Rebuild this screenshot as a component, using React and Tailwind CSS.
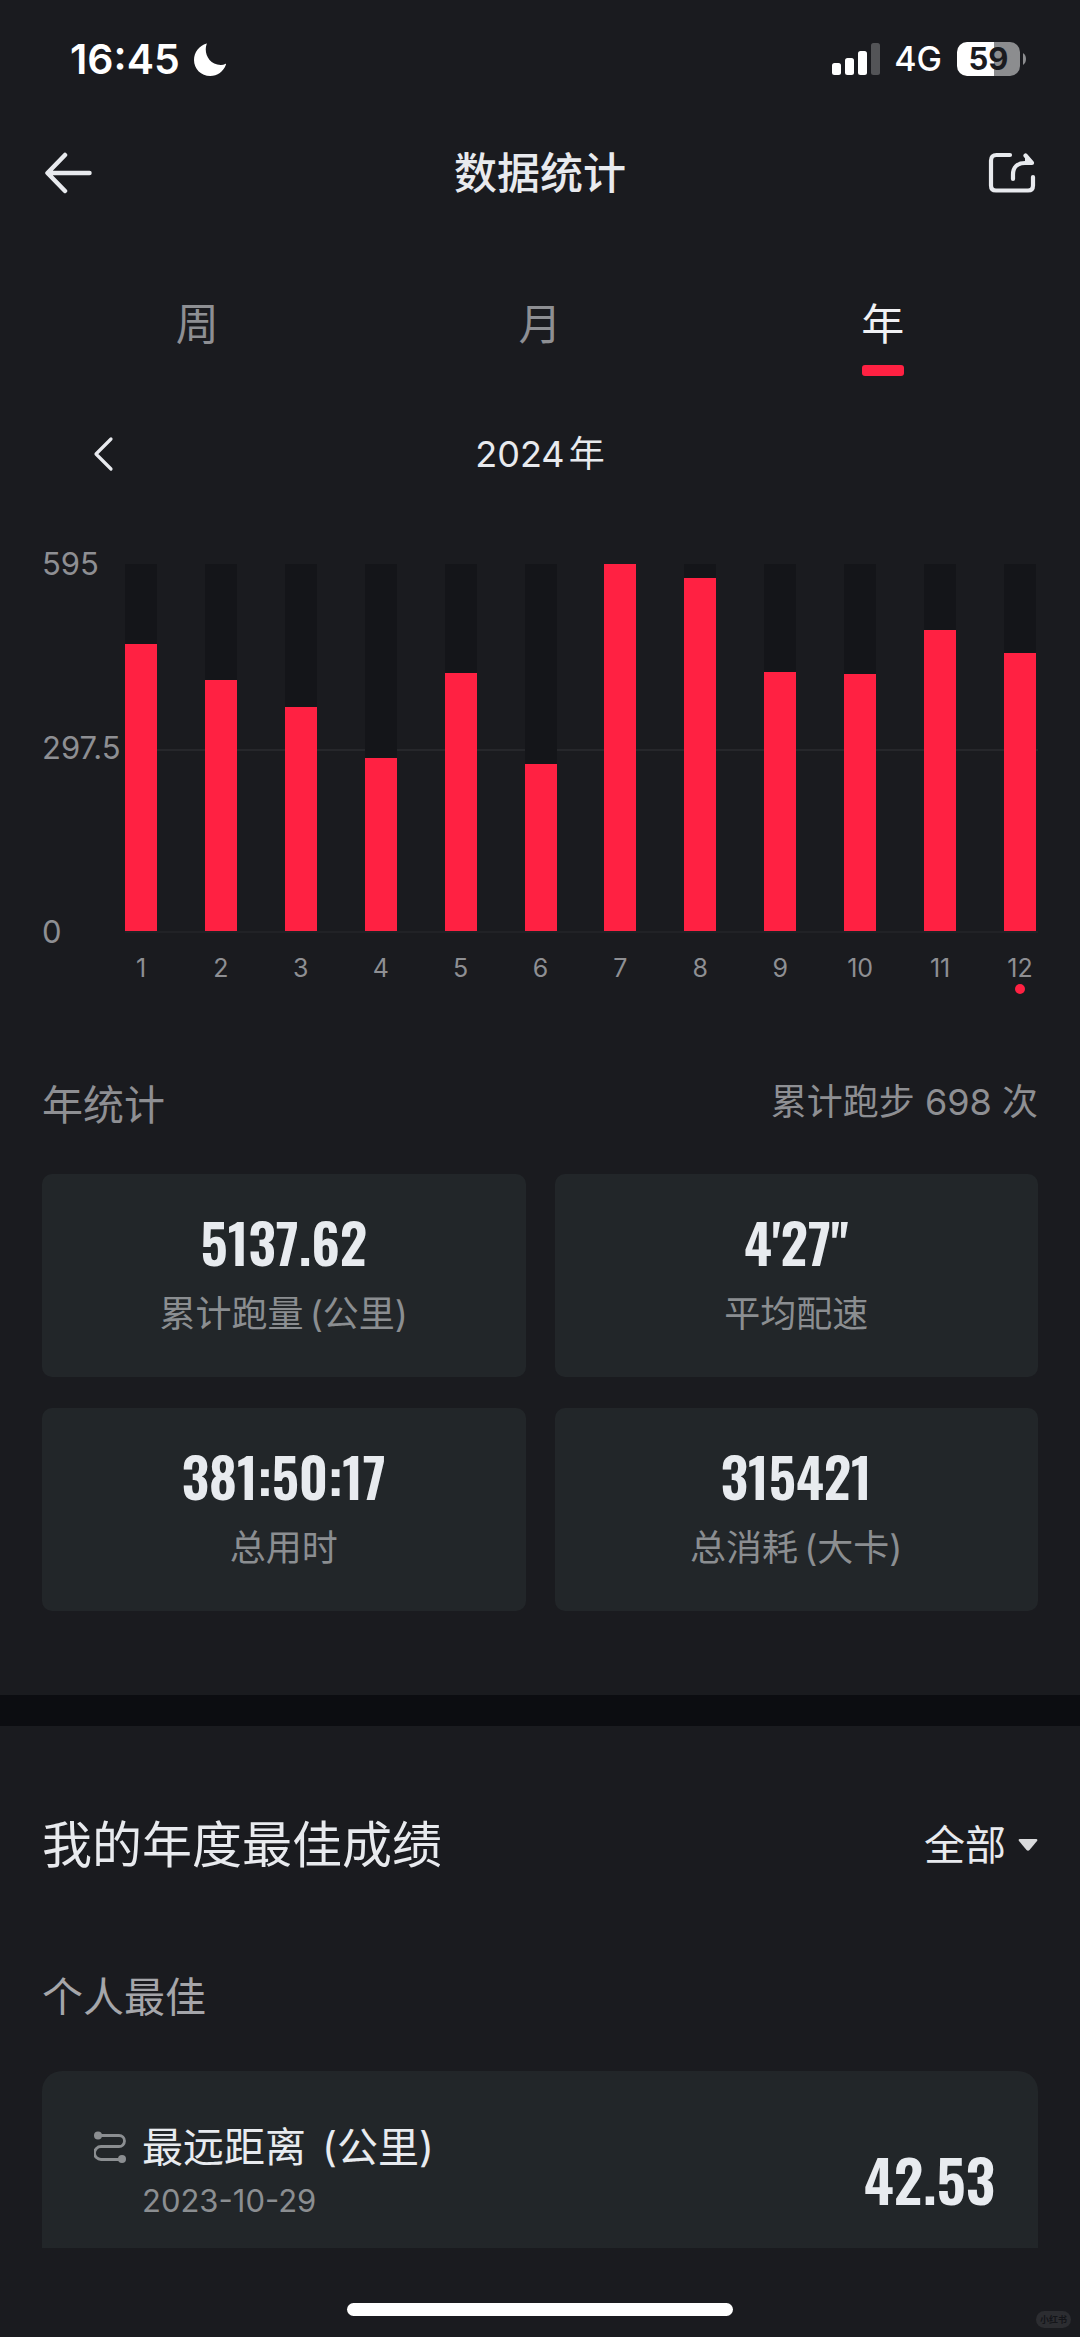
import { useState } from "react";
import clsx from "clsx";

const tabs = ["周", "月", "年"];

const months = [465, 407, 363, 280, 418, 271, 595, 572, 420, 417, 488, 451];
const maxDistance = 595;

const stats = [
  { value: "5137.62", label: "累计跑量", unit: "(公里)" },
  { value: "4'27''", label: "平均配速" },
  { value: "381:50:17", label: "总用时" },
  { value: "315421", label: "总消耗", unit: "(大卡)" },
];

const StatusBar = () => (
  <div className="flex h-[118px] items-center justify-between pr-[54px] pl-[70px] text-white">
    <div className="flex items-center gap-[14px]">
      <span className="text-[41px] leading-[48px] font-semibold">16:45</span>
      <svg className="h-[33px] w-8" viewBox="0 0 32 33" fill="currentColor">
        <path d="M12.6 0.4C13 0.1 12.9 0.3 12.6 1.2C9.5 10 15 22.2 27 22C28.6 22 30 21.6 31.2 21C31.9 20.7 32.2 20.9 31.9 21.7C29.5 28.4 23.4 33 16.2 33C7.2 33 0 25.8 0 16.9C0 9.3 5 2.8 12.6 0.4Z" />
      </svg>
    </div>
    <div className="flex items-center">
      <svg className="h-8 w-12" viewBox="0 0 48 32" fill="currentColor">
        <rect x="0" y="20" width="9" height="12" rx="2.5" />
        <rect x="13" y="15" width="9" height="17" rx="2.5" />
        <rect x="26" y="8" width="9" height="24" rx="2.5" />
        <rect x="39" y="0" width="9" height="32" rx="2.5" opacity="0.25" />
      </svg>
      <span className="ml-[14px] text-[34px] leading-10 font-medium">4G</span>
      <div className="ml-[15px] flex items-center gap-[3px]">
        <div className="flex h-[34px] w-[63px] items-center justify-center rounded-[10px] bg-linear-to-r from-white from-58% to-[#8c8d8f] to-58% text-[31px] leading-8 font-bold text-[#1a1b1f]">
          59
        </div>
        <svg className="h-3 w-[3px]" viewBox="0 0 3 12">
          <path d="M0 0C4 2.5 4 9.5 0 12Z" fill="#8c8d8f" />
        </svg>
      </div>
    </div>
  </div>
);

const Header = () => (
  <header className="flex h-[110px] items-center justify-between px-11 text-[#e8eaee]">
    <button type="button" aria-label="返回">
      <svg className="h-[42px] w-12" viewBox="0 0 48 42" fill="none" stroke="currentColor" strokeWidth="4.5" strokeLinecap="round" strokeLinejoin="round">
        <path d="M21 3L3.500 21L21 39M4 21H45.500" />
      </svg>
    </button>
    <h1 className="text-[43px] leading-[56px] font-medium">数据统计</h1>
    <button type="button" aria-label="分享">
      <svg className="h-[42px] w-12" viewBox="0 0 48 42" fill="none" stroke="currentColor" strokeWidth="4.200" strokeLinecap="round" strokeLinejoin="round">
        <path d="M22 3H8.500Q3 3 3 8.500V33.500Q3 38.500 8 38.500H40Q45 38.500 45 33.500V25" />
        <path d="M25 27V22.500C25 15 29.500 11 37 11H44L37.500 3.500" />
        <path d="M38 4.500L44.500 11H38Z" fill="currentColor" strokeWidth="2" />
      </svg>
    </button>
  </header>
);

const Chart = () => (
  <section aria-label="2024年跑量" className="mt-[90px] flex px-[42px] text-[#8e8f93]">
    <div className="-my-[18px] flex h-[404px] w-[83px] shrink-0 flex-col justify-between text-[31px] leading-9">
      <span>595</span>
      <span>297.5</span>
      <span>0</span>
    </div>
    <div className="flex-1">
      <div className="relative border-b-2 border-[#212226]">
        <div className="absolute inset-x-0 top-[185px] h-0.5 bg-[#26272b]" />
        <div className="relative flex h-[367px] justify-between pr-0.5">
          {months.map((distance, i) => (
            <div key={i} className="flex w-8 items-end bg-[#141519]">
              <div
                className="w-full bg-[#ff2142]"
                style={{ height: `${(distance / maxDistance) * 100}%` }}
              />
            </div>
          ))}
        </div>
      </div>
      <ol className="mt-[21px] flex justify-between pr-0.5 text-[25px] leading-7">
        {months.map((_, i) => (
          <li key={i} className="flex w-8 flex-col items-center gap-0.5">
            {i + 1}
            <span className={clsx("size-[10px] rounded-full", i === 11 && "bg-[#ff2142]")} />
          </li>
        ))}
      </ol>
    </div>
  </section>
);

const StatCard = ({ value, label, unit }) => (
  <div className="flex flex-col items-center gap-5 rounded-[10px] bg-[#222629] pt-10 pb-[39px]">
    <span className="font-['Oswald','Liberation_Sans_Narrow',sans-serif] text-[54px] leading-[56px] font-semibold text-[#e8ebef]">
      {value}
    </span>
    <span className="text-[36px] leading-[48px] text-[#8b8e91]">
      {label}
      {unit && <span className="ml-1.5">{unit}</span>}
    </span>
  </div>
);

const BestRecord = () => (
  <article className="mt-[50px] flex justify-between rounded-t-[20px] bg-[#222629] pt-[52px] pr-[43px] pb-[29px] pl-[52px]">
    <div className="flex gap-4">
      <svg className="mt-2 h-8 w-8" viewBox="0 0 32 32" fill="none" stroke="#8b8e91" strokeWidth="2.800">
        <path d="M4 4.500H25A5.500 5.500 0 0 1 25 15.500H7A6.500 6.500 0 0 0 7 28.500H28" />
        <circle cx="4" cy="4.500" r="4" fill="#8b8e91" stroke="none" />
        <circle cx="28" cy="28" r="4" fill="#8b8e91" stroke="none" />
      </svg>
      <div>
        <h4 className="text-[41px] leading-[48px] text-[#e8ebef]">
          最远距离
          <span className="ml-4">(公里)</span>
        </h4>
        <time dateTime="2023-10-29" className="mt-3 block text-[31px] leading-9 text-[#8b8e91]">
          2023-10-29
        </time>
      </div>
    </div>
    <span className="self-end font-['Oswald','Liberation_Sans_Narrow',sans-serif] text-[58px] leading-[80px] font-semibold text-[#e8ebef]">
      42.53
    </span>
  </article>
);

const App = () => {
  const [activeTab, setActiveTab] = useState("年");

  return (
    <div className="relative min-h-screen bg-[#1a1b1f] font-['Inter','Noto_Sans_CJK_SC',sans-serif]">
      <StatusBar />
      <Header />

      <main>
        <nav className="grid grid-cols-3 px-[26px] pt-[72px]">
          {tabs.map((tab) => (
            <button
              key={tab}
              type="button"
              onClick={() => setActiveTab(tab)}
              className={clsx(
                "flex flex-col items-center gap-[17px] text-[43px] leading-[48px]",
                tab === activeTab ? "text-[#f0f1f4]" : "text-[#8e8f93]"
              )}
            >
              {tab}
              <span className={clsx("h-[11px] w-[42px] rounded-[3px]", tab === activeTab && "bg-[#ff2142]")} />
            </button>
          ))}
        </nav>

        <div className="mt-[58px] grid h-10 grid-cols-3 items-center px-[92px] text-[#e8eaee]">
          <button type="button" aria-label="上一年" className="justify-self-start">
            <svg className="h-9 w-[22px]" viewBox="0 0 22 36" fill="none" stroke="currentColor" strokeWidth="3.200" strokeLinecap="round" strokeLinejoin="round">
              <path d="M19 3L4 18L19 33" />
            </svg>
          </button>
          <h2 className="flex items-center justify-center gap-1 text-[36px] leading-10">
            <span>2024</span>
            <span>年</span>
          </h2>
        </div>

        <Chart />

        <section className="mt-[87px] px-[42px]">
          <div className="flex items-start justify-between text-[#8e8f93]">
            <h3 className="text-[41px] leading-[48px]">年统计</h3>
            <p className="text-[36px] leading-[42px]">累计跑步 698 次</p>
          </div>
          <div className="mt-[45px] grid grid-cols-2 gap-x-[29px] gap-y-[31px]">
            {stats.map((stat) => (
              <StatCard key={stat.label} {...stat} />
            ))}
          </div>
        </section>

        <div className="mt-[84px] h-[31px] bg-[#0c0d11]" />

        <section className="px-[42px] pt-[89px]">
          <div className="flex items-center justify-between text-[#e8eaee]">
            <h2 className="text-[50px] leading-[60px]">我的年度最佳成绩</h2>
            <div className="flex items-center gap-3">
              <select aria-label="距离" className="appearance-none bg-transparent text-[41px] leading-[48px]">
                <option>全部</option>
              </select>
              <svg className="h-3 w-5" viewBox="0 0 20 12" fill="#d9dadc">
                <path d="M1.500 0H18.500Q20 0.500 19 2L11.500 11Q10 12.500 8.500 11L1 2Q0 0.500 1.500 0Z" />
              </svg>
            </div>
          </div>
          <h3 className="mt-[98px] text-[41px] leading-[48px] text-[#a5a6aa]">个人最佳</h3>
          <BestRecord />
        </section>
      </main>

      <footer className="flex justify-center pt-[55px] pb-[21px]">
        <div className="h-[13px] w-[386px] rounded-full bg-white" />
      </footer>
      <span className="absolute right-[9px] bottom-[9px] rounded-full bg-[#2c2d31] px-1 text-[9px] leading-[17px] font-bold text-[#141519]">
        小红书
      </span>
    </div>
  );
};

export default App;
